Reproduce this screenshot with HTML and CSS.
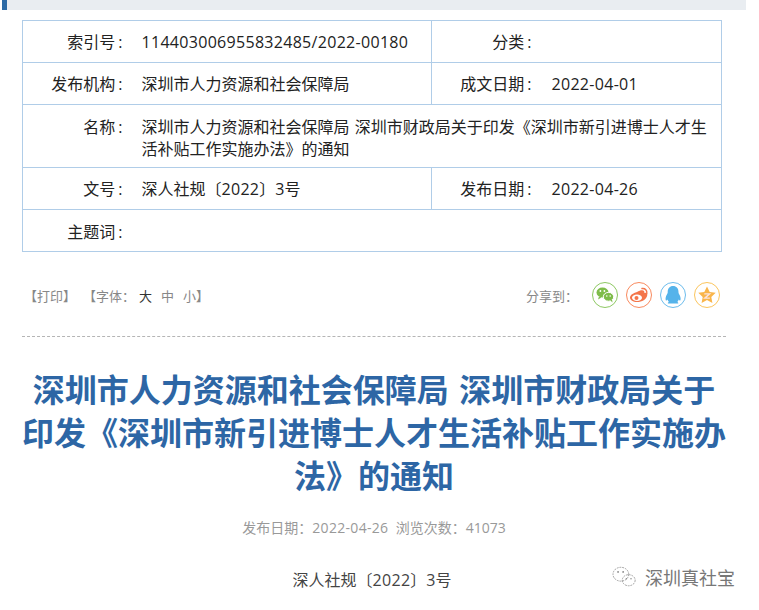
FILE: index.html
```html
<!DOCTYPE html>
<html lang="zh-CN">
<head>
<meta charset="utf-8">
<title>深圳市新引进博士人才生活补贴工作实施办法</title>
<link rel="stylesheet" href="styles.css">
</head>
<body>
<div class="topbar"><span class="topbar-mark"></span><span class="topbar-fill"></span></div>
<main class="page">
  <table class="info">
    <colgroup><col class="c1"><col class="c2"><col class="c3"><col class="c4"></colgroup>
    <tr class="r42"><th>索引号<span class="colon">:</span></th><td><span class="num">114403006955832485/2022-00180</span></td><th>分类<span class="colon">:</span></th><td></td></tr>
    <tr class="r42"><th>发布机构<span class="colon">:</span></th><td>深圳市人力资源和社会保障局</td><th>成文日期<span class="colon">:</span></th><td><span class="num">2022-04-01</span></td></tr>
    <tr class="r63"><th>名称<span class="colon">:</span></th><td colspan="3">深圳市人力资源和社会保障局 深圳市财政局关于印发《深圳市新引进博士人才生活补贴工作实施办法》的通知</td></tr>
    <tr class="r42"><th>文号<span class="colon">:</span></th><td>深人社规〔<span class="num">2022</span>〕3号</td><th>发布日期<span class="colon">:</span></th><td><span class="num">2022-04-26</span></td></tr>
    <tr class="r42 last"><th>主题词<span class="colon">:</span></th><td colspan="3"></td></tr>
  </table>

  <div class="tools">
    <div class="tools-left">
      <span class="print">【打印】</span>
      <span class="font-size">【字体&#xFF1A;<b class="dark">大</b><b>中</b><b>小</b>】</span>
    </div>
    <div class="share">
      <span class="share-label">分享到&#xFF1A;</span>
      <span class="ico ico-wx"><svg viewBox="0 0 26 26" width="26" height="26"><ellipse cx="10.500" cy="10.500" rx="6" ry="5" fill="#7ebc4a"/><path d="M7 14.500l-1 3 3.500-2z" fill="#7ebc4a"/><ellipse cx="16.500" cy="14.800" rx="5.200" ry="4.400" fill="#7ebc4a" stroke="#fff" stroke-width="1"/><path d="M18.500 18.500l2 2-.5-3z" fill="#7ebc4a"/><circle cx="8.400" cy="9" r=".9" fill="#fff"/><circle cx="12.400" cy="9" r=".9" fill="#fff"/><circle cx="14.800" cy="14" r=".8" fill="#fff"/><circle cx="18.200" cy="14" r=".8" fill="#fff"/></svg></span>
      <span class="ico ico-wb"><svg viewBox="0 0 26 26" width="26" height="26"><path d="M11 10c3-2 6-2.500 7-1 .6 1 .2 2 .2 2 2-.6 3.400.4 3 2.400C20.600 17 16 20 11 20c-4 0-7-2-7-4.600C4 13.500 7 11 11 10z" fill="#f4764b"/><ellipse cx="11" cy="15.800" rx="5" ry="3.200" fill="#fff"/><circle cx="10.500" cy="16" r="2" fill="#f4764b"/><path d="M16 6.500c3-.6 5.500 2 4.800 5" fill="none" stroke="#f4764b" stroke-width="1.500" stroke-linecap="round"/></svg></span>
      <span class="ico ico-qq"><svg viewBox="0 0 26 26" width="26" height="26"><path d="M13 4c3.500 0 5.500 2.500 5.500 6 0 1 .2 1.500.8 2.500 1 1.800 1.600 3.500 1.200 5.500-.4 1-1.200.6-1.800-.5-.3 1.200-.8 2-1.500 2.600 1 .4 1.400 1 1 1.400H8c-.6-.4 0-1 1-1.400-.7-.6-1.200-1.400-1.500-2.600-.6 1.100-1.400 1.500-1.800.5-.4-2 .2-3.700 1.200-5.500.6-1 .8-1.500.8-2.500 0-3.500 2-6 5.300-6z" fill="#55b3ea"/></svg></span>
      <span class="ico ico-st"><svg viewBox="0 0 26 26" width="26" height="26"><path d="M13 4.500l2.700 5.500 6 .8-4.400 4.200 1.100 6-5.400-2.900-5.400 2.900 1.100-6-4.400-4.200 6-.8z" fill="#f9b54a"/><path d="M10.300 11.800h5.400l-5 4.400h5.200" fill="none" stroke="#fbe3e0" stroke-width="1.300"/></svg></span>
    </div>
  </div>

  <div class="divider"></div>

  <h1 class="title">深圳市人力资源和社会保障局 深圳市财政局关于印发《深圳市新引进博士人才生活补贴工作实施办法》的通知</h1>
  <p class="meta">发布日期&#xFF1A;<span class="num">2022-04-26</span>&nbsp;&nbsp;浏览次数&#xFF1A;41073</p>
  <p class="docno">深人社规〔<span class="num">2022</span>〕3号</p>
</main>
<div class="watermark">
  <svg viewBox="0 0 30 26" width="28" height="24"><g fill="none" stroke="#9a9a9a" stroke-width="1" stroke-dasharray="2 1"><ellipse cx="10.500" cy="10" rx="8.500" ry="7.500"/><ellipse cx="19" cy="16.500" rx="7" ry="6"/></g><circle cx="7.500" cy="7.500" r="1" fill="#888"/><circle cx="13" cy="7.500" r="1" fill="#888"/><circle cx="16.500" cy="15" r=".8" fill="#888"/><circle cx="21.500" cy="15" r=".8" fill="#888"/></svg>
  <span>深圳真社宝</span>
</div>
</body>
</html>
```
FILE: styles.css
```css
* { box-sizing: border-box; }
html, body { margin: 0; padding: 0; height: 610px; overflow: hidden; }
body {
  background: #fff;
  color: #333;
  font-family: "Open Sans", "Noto Sans CJK SC", sans-serif;
  position: relative;
}
.topbar { display: flex; height: 10px; margin-left: 2px; width: 744px; }
.topbar-mark { width: 5px; background: #2c6aa5; }
.topbar-fill { flex: 1; background: #e9edf1; }
.page { padding: 10px 0 0 22px; width: 726px; }
.num { letter-spacing: .3px; }

.info {
  border-collapse: collapse;
  table-layout: fixed;
  width: 699px;
  font-size: 16px;
  line-height: 22px;
  word-spacing: 1px;
  color: #222;
}
.c1 { width: 109px; }
.c2 { width: 300px; }
.c3 { width: 111px; }
.c4 { width: 179px; }
.info th, .info td { border: 1px solid #b0cde8; padding: 0; }
.info th {
  font-weight: 400;
  text-align: right;
  padding-right: 9px;
  border-right: 0;
}
.info th:nth-child(3) { padding-right: 11px; }
.info td { padding-left: 10px; padding-right: 10px; border-left: 0; }
.info td:nth-child(4) { padding-left: 9px; }
.colon { margin-left: 3px; }
.r42 { height: 42px; }
.r63 { height: 63px; }
.info .r63 th, .info .r63 td { vertical-align: top; padding-top: 11px; }
.info .last th { padding-top: 2px; }

.tools {
  display: flex;
  justify-content: space-between;
  align-items: center;
  height: 30px;
  margin-top: 28px;
  padding-right: 6px;
  font-size: 13px;
  color: #888;
}
.tools-left { display: flex; gap: 7px; margin-left: 2px; }
.font-size b { font-weight: 400; margin-left: 9px; }
.font-size b:first-of-type { margin-left: 4px; }
.dark { color: #333; }
.share { display: flex; align-items: center; gap: 8px; }
.share-label { margin-right: 6px; }
.ico {
  display: flex;
  width: 26px;
  height: 26px;
  border: 1px solid;
  border-radius: 50%;
  align-items: center;
  justify-content: center;
  overflow: hidden;
}
.ico svg { flex: none; }
.ico-wx { border-color: #8dc862; }
.ico-wb { border-color: #f98a5e; }
.ico-qq { border-color: #6cbcec; }
.ico-st { border-color: #fbc55d; }

.divider { border-top: 1px dashed #b5b5b5; margin-top: 26px; width: 704px; }
.title {
  margin: 31px 0 0;
  width: 704px;
  text-align: center;
  font-size: 32px;
  line-height: 43px;
  font-weight: 700;
  word-spacing: 2px;
  color: #2d66a5;
}
.meta {
  margin: 21px 0 0;
  width: 704px;
  text-align: center;
  font-size: 14px;
  line-height: 20px;
  color: #999;
}
.docno {
  margin: 31px 0 0;
  width: 700px;
  text-align: center;
  font-size: 16px;
  line-height: 22px;
  color: #444;
}
.watermark {
  position: absolute;
  left: 611px;
  top: 564px;
  display: flex;
  align-items: center;
  gap: 6px;
  font-size: 18px;
  color: #777;
}
```
